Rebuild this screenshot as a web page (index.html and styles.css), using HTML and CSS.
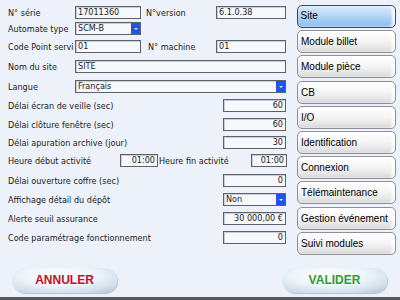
FILE: index.html
```html
<!DOCTYPE html>
<html lang="fr">
<head>
<meta charset="utf-8">
<link rel="stylesheet" href="styles.css">
</head>
<body>
<div class="screen">
  <div class="main">
    <div class="form">
      <div class="row r1">
        <span class="lbl w67">N° série</span>
        <span class="field w66">17011360</span>
        <span class="lbl2 w75">N°version</span>
        <span class="field w70">6.1.0.38</span>
      </div>
      <div class="row r2">
        <span class="lbl w67">Automate type</span>
        <span class="field select w66">SCM-B<i class="arrow"></i></span>
      </div>
      <div class="row r3">
        <span class="lbl w67">Code Point servi</span>
        <span class="field w66">01</span>
        <span class="lbl2 m w75">N° machine</span>
        <span class="field w70">01</span>
      </div>
      <div class="row r4">
        <span class="lbl w67">Nom du site</span>
        <span class="field w211">SITE</span>
      </div>
      <div class="row r5">
        <span class="lbl w67">Langue</span>
        <span class="field select w211">Français<i class="arrow"></i></span>
      </div>
      <div class="row r6">
        <span class="lbl w215">Délai écran de veille (sec)</span>
        <span class="field num w63">60</span>
      </div>
      <div class="row r7">
        <span class="lbl w215">Délai clôture fenêtre (sec)</span>
        <span class="field num w63">60</span>
      </div>
      <div class="row r8">
        <span class="lbl w215">Délai apuration archive (jour)</span>
        <span class="field num w63">30</span>
      </div>
      <div class="row r9">
        <span class="lbl w112">Heure début activité</span>
        <span class="field num w38">01:00</span>
        <span class="lbl3 w92">Heure fin activité</span>
        <span class="field num w36">01:00</span>
      </div>
      <div class="row r10">
        <span class="lbl w215">Délai ouverture coffre (sec)</span>
        <span class="field num w63">0</span>
      </div>
      <div class="row r11">
        <span class="lbl w215">Affichage détail du dépôt</span>
        <span class="field select w63">Non<i class="arrow"></i></span>
      </div>
      <div class="row r12">
        <span class="lbl w215">Alerte seuil assurance</span>
        <span class="field num w63">30 000,00 €</span>
      </div>
      <div class="row r13">
        <span class="lbl w215">Code paramétrage fonctionnement</span>
        <span class="field num w63">0</span>
      </div>
    </div>
    <nav class="menu">
      <div class="mbtn active">Site</div>
      <div class="mbtn">Module billet</div>
      <div class="mbtn">Module pièce</div>
      <div class="mbtn">CB</div>
      <div class="mbtn">I/O</div>
      <div class="mbtn">Identification</div>
      <div class="mbtn">Connexion</div>
      <div class="mbtn">Télémaintenance</div>
      <div class="mbtn">Gestion événement</div>
      <div class="mbtn">Suivi modules</div>
    </nav>
  </div>
  <div class="actions">
    <div class="pill cancel">ANNULER</div>
    <div class="pill ok">VALIDER</div>
  </div>
  <div class="bottombar"></div>
</div>
</body>
</html>
```
FILE: styles.css
```css
html, body {
  margin: 0;
  padding: 0;
}
body {
  width: 400px;
  height: 300px;
  overflow: hidden;
  background: #edf2fa;
  font-family: "DejaVu Sans Condensed", "DejaVu Sans", sans-serif;
  color: #1a1a1a;
}
.screen {
  width: 400px;
  height: 300px;
  display: flex;
  flex-direction: column;
}
.main {
  display: flex;
  height: 263px;
}
.form {
  width: 297px;
  padding: 6px 0 0 8px;
  box-sizing: border-box;
}
.row {
  display: flex;
  align-items: center;
  height: 13px;
  font-size: 9px;
}
.r2 { margin-top: 3px; }
.r3 { margin-top: 5px; }
.r4 { margin-top: 7px; }
.r5 { margin-top: 7px; }
.r6 { margin-top: 6px; }
.r7 { margin-top: 6px; }
.r8 { margin-top: 5px; }
.r9 { margin-top: 5px; }
.r10 { margin-top: 7px; }
.r11 { margin-top: 6px; }
.r12 { margin-top: 6px; }
.r13 { margin-top: 6px; }

.lbl { white-space: nowrap; }
.lbl2 { white-space: nowrap; padding-left: 5px; box-sizing: border-box; }
.lbl2.m { padding-left: 7px; }
.lbl3 { white-space: nowrap; padding-left: 1px; box-sizing: border-box; }
.w67 { width: 67px; }
.w75 { width: 75px; }
.w112 { width: 112px; }
.w215 { width: 215px; }
.w92 { width: 93px; }

.field {
  height: 13px;
  box-sizing: border-box;
  border: 1px solid #5e6168;
  box-shadow: inset 1px 1px 0 #c9ced8;
  background: #f6f8fc;
  padding: 0 2px;
  line-height: 11px;
  font-size: 9px;
  white-space: nowrap;
  overflow: hidden;
  position: relative;
  color: #222;
}
.num { text-align: right; padding-right: 2px; }
.w66 { width: 66px; }
.w70 { width: 70px; }
.w211 { width: 211px; }
.w63 { width: 63px; }
.w38 { width: 38px; }
.w36 { width: 36px; }

.select .arrow {
  position: absolute;
  right: 0;
  top: 0;
  width: 9px;
  height: 11px;
  background: #1f55e6;
}
.select .arrow::after {
  content: "";
  position: absolute;
  left: 3px;
  top: 5px;
  border-left: 2px solid transparent;
  border-right: 2px solid transparent;
  border-top: 2px solid #dfe8ff;
}

.menu {
  display: flex;
  flex-direction: column;
  gap: 2.2px;
  padding-top: 5px;
  width: 99px;
}
.mbtn {
  height: 23px;
  box-sizing: border-box;
  border: 1px solid #8d9097;
  border-radius: 5px;
  background: linear-gradient(to bottom, #ffffff 0%, #f6f6f6 45%, #e6e6e6 80%, #d2d2d2 100%);
  box-shadow: inset -3px 0 3px rgba(255,255,255,0.9);
  font-family: "Liberation Sans", Arial, sans-serif;
  font-size: 10px;
  line-height: 21px;
  padding-left: 3px;
  color: #000;
  white-space: nowrap;
  overflow: hidden;
}
.mbtn.active {
  border: 1.5px solid #3b4a66;
  background: linear-gradient(to bottom, #dcebfc 0%, #b6d5f6 45%, #9cc5f1 80%, #86b6ea 100%);
  line-height: 20px;
  padding-left: 2.5px;
}

.actions {
  display: flex;
  justify-content: space-between;
  padding: 5px 13px 0 12px;
  height: 34px;
  box-sizing: border-box;
}
.pill {
  width: 105px;
  height: 25px;
  border-radius: 13px;
  background: radial-gradient(ellipse 80% 90% at 45% 30%, #ffffff 0%, #eef4fa 45%, #cfdde9 80%, #aebfcf 100%);
  box-shadow: 1px 1px 1px rgba(90,110,130,0.35);
  font-family: "Liberation Sans", Arial, sans-serif;
  font-weight: bold;
  font-size: 12px;
  line-height: 25px;
  text-align: center;
}
.cancel { color: #c0112c; }
.ok { color: #2f9b3c; }
.bottombar {
  height: 3px;
  background: #55585e;
}
```
